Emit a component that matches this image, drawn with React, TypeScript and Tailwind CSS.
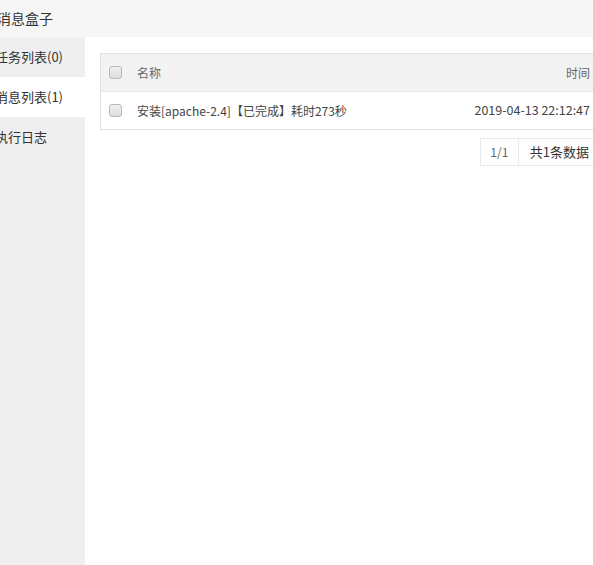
const FONT = "font-['Microsoft_YaHei','Noto_Sans_CJK_SC',sans-serif]";

const MENU = [
  { label: "任务列表(0)", active: false },
  { label: "消息列表(1)", active: true },
  { label: "执行日志", active: false },
];

function Checkbox() {
  return (
    <span className="block h-[13px] w-[13px] rounded-[3px] border border-[#b9b9b9] bg-gradient-to-b from-[#f0f0f0] to-[#dedede]" />
  );
}

export default function App() {
  return (
    <div className={`h-[565px] w-[593px] overflow-hidden bg-white ${FONT}`}>
      <div className="-ml-[10px] flex h-[565px] w-[620px] flex-col">
        <header className="flex h-[37px] shrink-0 items-center bg-[#f6f6f6] pl-[7px] text-[14px] text-[#333]">
          消息盒子
        </header>
        <div className="flex flex-1">
          <aside className="w-[95px] shrink-0 bg-[#efefef]">
            {MENU.map((item) => (
              <div
                key={item.label}
                className={`flex h-[40px] items-center pl-[5px] text-[13px] text-[#333] ${item.active ? "bg-white" : ""}`}
              >
                {item.label}
              </div>
            ))}
          </aside>
          <main className="flex-1 pl-[15px] pr-[10px] pt-[16px]">
            <div className="border border-[#e2e2e2] text-[12px] text-[#666]">
              <div className="flex h-[38px] items-center border-b border-[#e6e6e6] bg-[#f3f3f3] pl-[8px] pr-[9px]">
                <Checkbox />
                <span className="ml-[15px] flex-1">名称</span>
                <span>时间</span>
              </div>
              <div className="flex h-[37px] items-center pl-[8px] pr-[9px] text-[#444]">
                <Checkbox />
                <span className="ml-[15px] flex-1">安装[apache-2.4]【已完成】耗时273秒</span>
                <span className="text-[12.5px]">2019-04-13 22:12:47</span>
              </div>
            </div>
            <div className="mt-[8px] flex justify-end">
              <div className="flex h-[28px] border border-[#eaeaea] text-[13px] text-[#333]">
                <span className="flex w-[38px] items-center justify-center border-r border-[#eaeaea] text-[12px] text-[#666]">1/1</span>
                <span className="flex items-center pl-[11px] pr-[10px]">共1条数据</span>
              </div>
            </div>
          </main>
        </div>
      </div>
    </div>
  );
}
